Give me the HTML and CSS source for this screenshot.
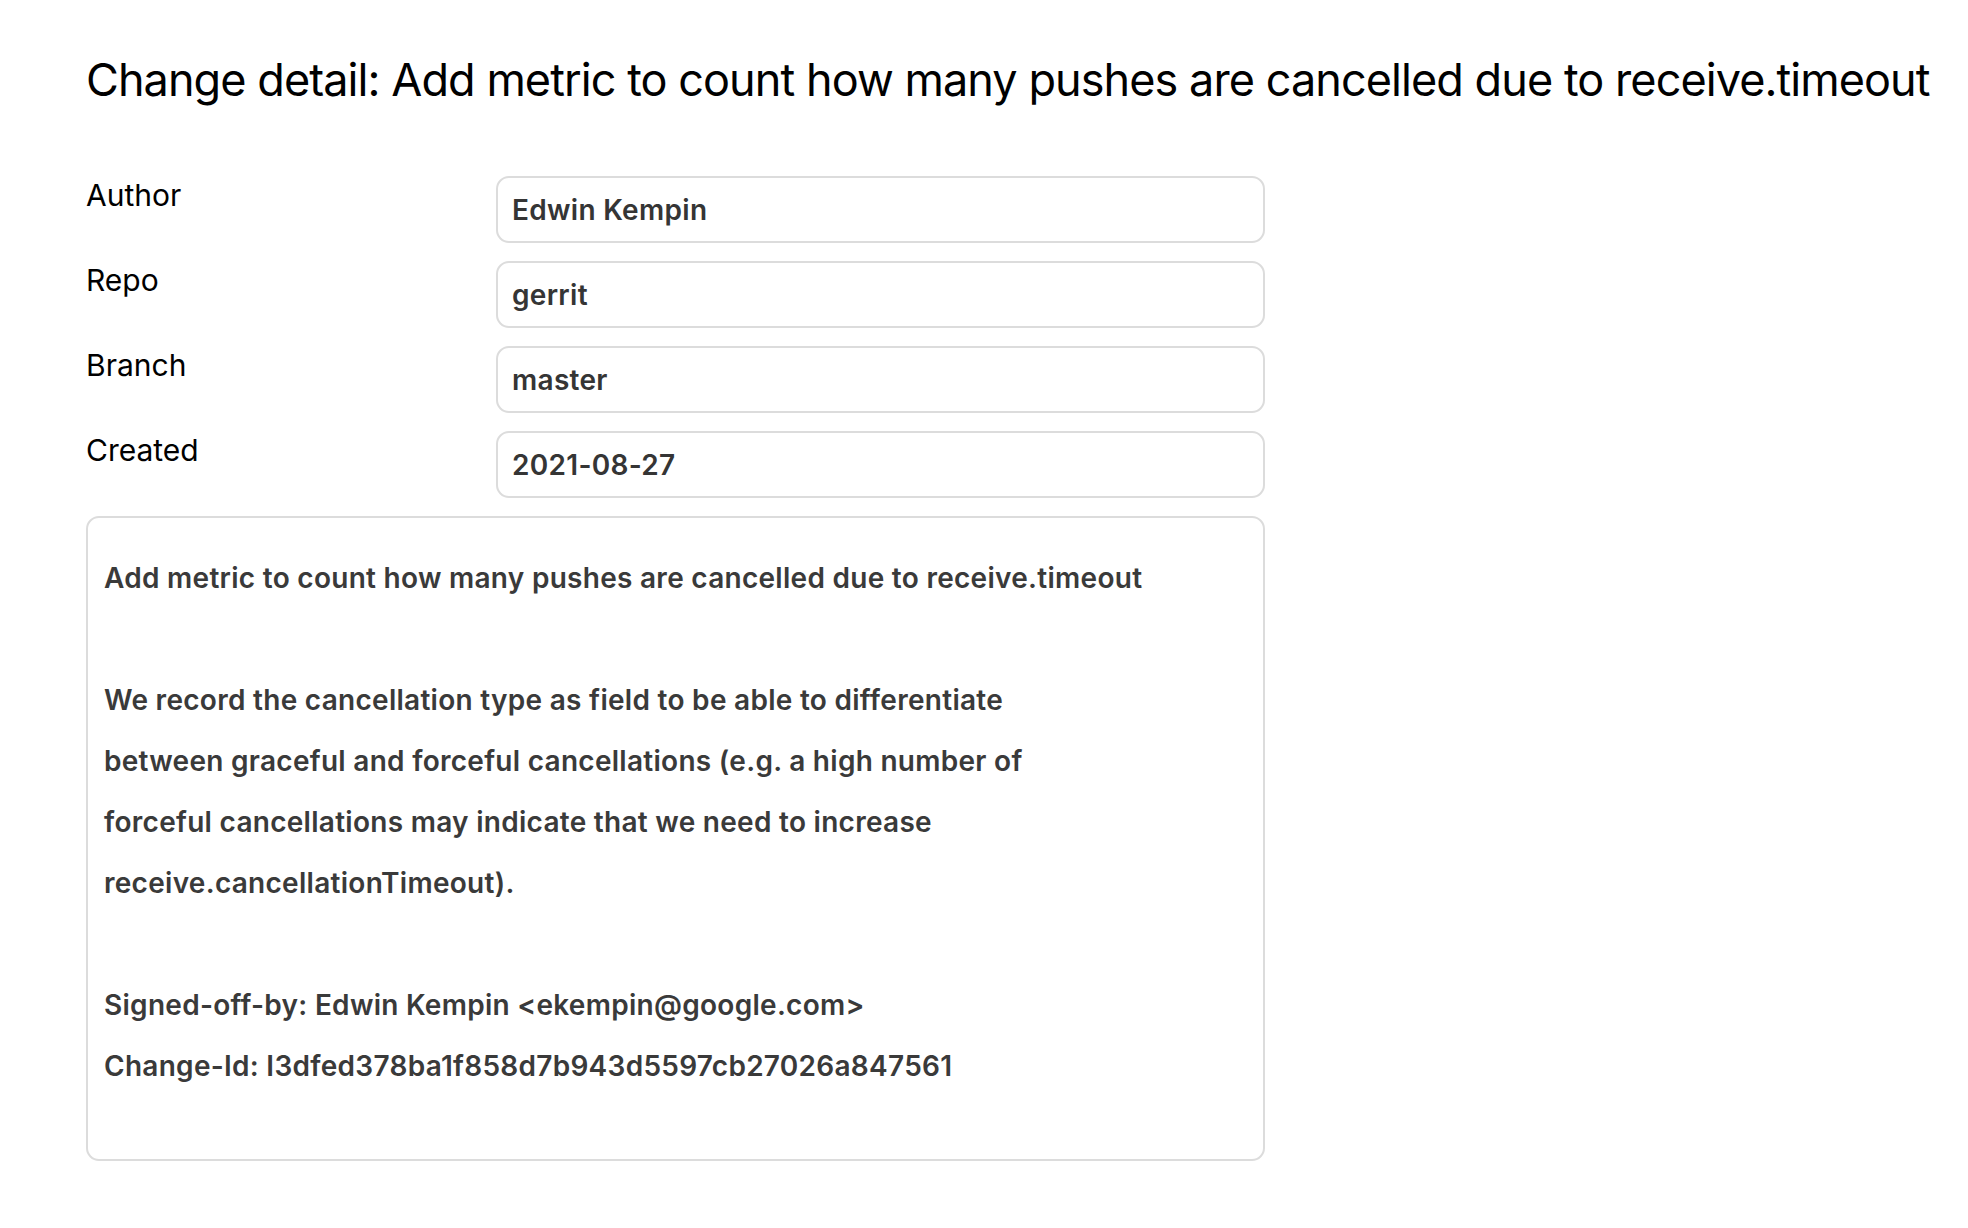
FILE: index.html
```html
<!DOCTYPE html>
<html lang="en">
<head>
<meta charset="utf-8">
<title>Change detail</title>
<link rel="stylesheet" href="styles.css">
</head>
<body>
<main class="page">
  <h1 class="title">Change detail: Add metric to count how many pushes are cancelled due to receive.timeout</h1>
  <section class="details">
    <div class="label">Author</div>
    <div class="field">Edwin Kempin</div>
    <div class="label">Repo</div>
    <div class="field">gerrit</div>
    <div class="label">Branch</div>
    <div class="field">master</div>
    <div class="label">Created</div>
    <div class="field">2021-08-27</div>
    <div class="message">Add metric to count how many pushes are cancelled due to receive.timeout

We record the cancellation type as field to be able to differentiate
between graceful and forceful cancellations (e.g. a high number of
forceful cancellations may indicate that we need to increase
receive.cancellationTimeout).

Signed-off-by: Edwin Kempin &lt;ekempin@google.com&gt;
Change-Id: I3dfed378ba1f858d7b943d5597cb27026a847561</div>
  </section>
</main>
</body>
</html>
```
FILE: styles.css
```css
html, body {
  margin: 0;
  padding: 0;
  background: #ffffff;
}

body {
  font-family: Inter, "Noto Sans", "Liberation Sans", sans-serif;
  color: #000000;
}

.page {
  padding: 53px 0 0 86px;
}

.title {
  margin: 0;
  font-size: 45px;
  line-height: 54px;
  font-weight: 400;
  letter-spacing: -0.93px;
  color: #000000;
  white-space: nowrap;
}

.details {
  margin-top: 69px;
  width: 1179px;
  display: grid;
  grid-template-columns: 410px 769px;
  row-gap: 18px;
}

.label {
  font-size: 30px;
  line-height: 36px;
  padding-top: 1px;
  color: #000000;
}

.field {
  box-sizing: border-box;
  height: 67px;
  border: 2px solid #dcdcdc;
  border-radius: 13px;
  padding: 0 14px;
  display: flex;
  align-items: center;
  font-size: 28px;
  font-weight: 600;
  letter-spacing: 0.3px;
  color: #353535;
}

.message {
  grid-column: 1 / -1;
  box-sizing: border-box;
  border: 2px solid #dcdcdc;
  border-radius: 13px;
  padding: 30px 16px 62px 16px;
  font-size: 28px;
  line-height: 61px;
  font-weight: 600;
  letter-spacing: 0.28px;
  color: #3a3a3a;
  white-space: pre-wrap;
}
```
